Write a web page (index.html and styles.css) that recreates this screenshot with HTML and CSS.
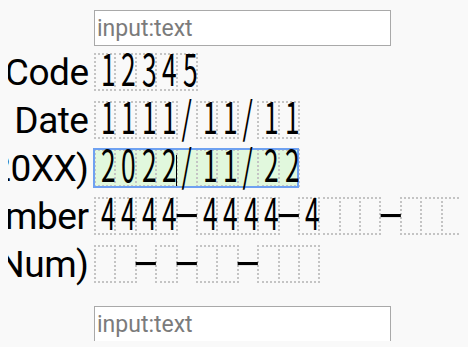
FILE: index.html
```html
<!DOCTYPE html>
<html lang="ja">
<head>
    <meta charset="UTF-8">
    <meta name="viewport" content="width=device-width, initial-scale=1.0">
    <title>Mask input</title>
    <link rel="stylesheet" href="styles.css">
</head>
<body>
    <form class="Mask-Form">
        <div class="Row Row-Top">
            <span class="Label"></span>
            <input class="Plain" type="text" placeholder="input:text">
        </div>
        <div class="Row">
            <label class="Label"><span>Code</span></label>
            <div class="Field">
                <span class="Cell"><i>1</i></span><span class="Cell"><i>2</i></span><span class="Cell"><i>3</i></span><span class="Cell"><i>4</i></span><span class="Cell"><i>5</i></span>
            </div>
        </div>
        <div class="Row">
            <label class="Label"><span>Date</span></label>
            <div class="Field">
                <span class="Cell"><i>1</i></span><span class="Cell"><i>1</i></span><span class="Cell"><i>1</i></span><span class="Cell"><i>1</i></span><span class="Sep"><i>/</i></span><span class="Cell"><i>1</i></span><span class="Cell"><i>1</i></span><span class="Sep"><i>/</i></span><span class="Cell"><i>1</i></span><span class="Cell"><i>1</i></span>
            </div>
        </div>
        <div class="Row">
            <label class="Label"><span>Date (20XX)</span></label>
            <div class="Field Focus">
                <span class="Cell"><i>2</i></span><span class="Cell"><i>0</i></span><span class="Cell"><i>2</i></span><span class="Cell"><i>2</i></span><span class="Sep Caret"><i>/</i></span><span class="Cell"><i>1</i></span><span class="Cell"><i>1</i></span><span class="Sep"><i>/</i></span><span class="Cell"><i>2</i></span><span class="Cell"><i>2</i></span>
            </div>
        </div>
        <div class="Row">
            <label class="Label"><span>Card Number</span></label>
            <div class="Field">
                <span class="Cell"><i>4</i></span><span class="Cell"><i>4</i></span><span class="Cell"><i>4</i></span><span class="Cell"><i>4</i></span><span class="Sep"><b>-</b></span><span class="Cell"><i>4</i></span><span class="Cell"><i>4</i></span><span class="Cell"><i>4</i></span><span class="Cell"><i>4</i></span><span class="Sep"><b>-</b></span><span class="Cell"><i>4</i></span><span class="Cell"></span><span class="Cell"></span><span class="Cell"></span><span class="Sep"><b>-</b></span><span class="Cell"></span><span class="Cell"></span><span class="Cell"></span><span class="Cell"></span>
            </div>
        </div>
        <div class="Row">
            <label class="Label"><span>(Tel Num)</span></label>
            <div class="Field">
                <span class="Cell"></span><span class="Cell"></span><span class="Sep"><b>-</b></span><span class="Cell"></span><span class="Sep"><b>-</b></span><span class="Cell"></span><span class="Cell"></span><span class="Sep"><b>-</b></span><span class="Cell"></span><span class="Cell"></span><span class="Cell"></span>
            </div>
        </div>
        <div class="Row Row-Bottom">
            <span class="Label"></span>
            <input class="Plain" type="text" placeholder="input:text">
        </div>
    </form>
</body>
</html>
```

FILE: styles.css
```css
html
{
    overflow: hidden;
}
body
{
    margin: 8px;
    background-color: #f9f9f9;
    font-family: Roboto, "Noto Sans CJK JP", sans-serif;
}
.Mask-Form
{
    display: grid;
    row-gap: 10px;
    padding-top: 1px;
}
.Row
{
    display: grid;
    grid-template-columns: 80px auto;
    column-gap: 6px;
    align-items: center;
    height: 38px;
}
.Row-Top,
.Row-Bottom
{
    height: 36px;
}
.Row-Top
{
    margin-bottom: -2px;
}
.Row-Bottom
{
    margin-top: 12px;
}
.Label
{
    display: flex;
    justify-content: flex-end;
    font-size: 37px;
    letter-spacing: -0.5px;
    line-height: 38px;
    height: 38px;
    white-space: nowrap;
    color: #000;
}
.Label span
{
    position: relative;
    top: 1px;
    right: -0.5px;
}
.Plain
{
    box-sizing: border-box;
    width: 297px;
    height: 36px;
    margin: 0;
    padding: 0 2px;
    border: 1px solid #a9a9a9;
    background: #fff;
    font-family: Roboto, sans-serif;
    font-size: 23px;
}
.Plain::placeholder
{
    color: #7b7b7b;
}
.Field
{
    display: flex;
    width: max-content;
}
.Cell,
.Sep
{
    flex: none;
    box-sizing: border-box;
    width: 22.4px;
    height: 38px;
    margin-right: -2px;
    border: 2px dotted #c4c4c4;
    text-align: center;
    font-family: "Noto Sans CJK JP", sans-serif;
    font-size: 44px;
    line-height: 25.6px;
    color: #000;
}
.Sep
{
    border-color: transparent;
}
.Cell i,
.Sep i
{
    display: inline-block;
    font-style: normal;
    transform: scaleX(0.6);
}
.Sep b
{
    display: inline-block;
    font-weight: normal;
    transform: translateY(-2px) scaleX(1.8);
}
.Focus
{
    background-color: #e1f8dd;
    outline: 2px solid #6ea1f1;
    outline-offset: -1px;
}
.Caret
{
    position: relative;
}
.Caret::before
{
    content: "";
    position: absolute;
    left: -2px;
    top: 4px;
    height: 31px;
    border-left: 1px solid #000;
}
```
